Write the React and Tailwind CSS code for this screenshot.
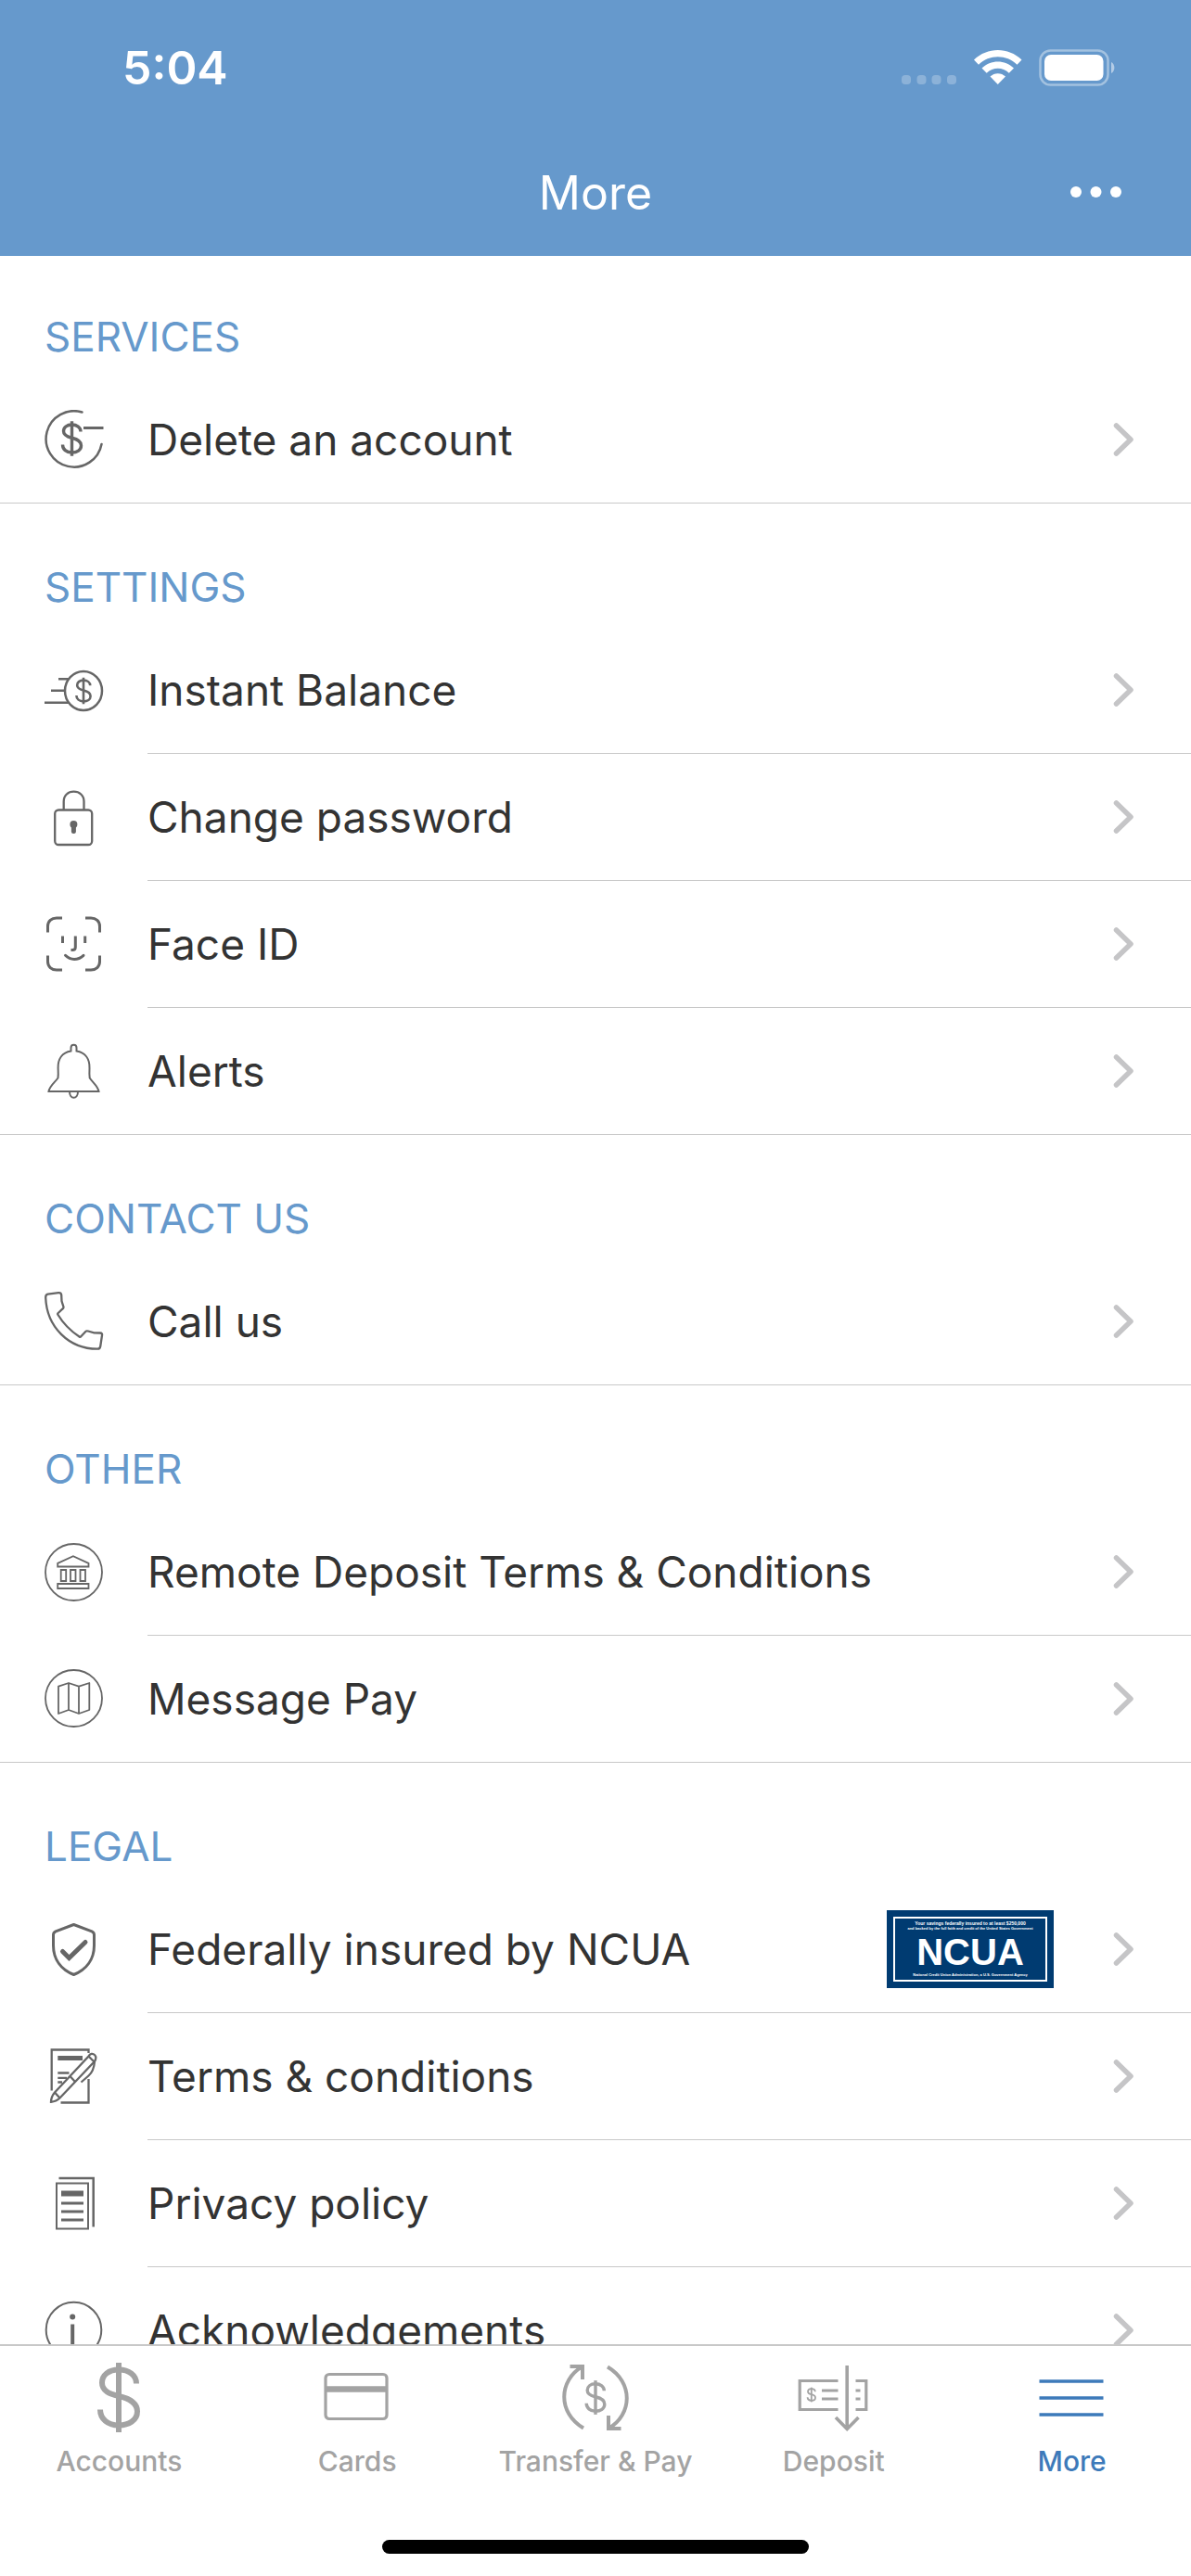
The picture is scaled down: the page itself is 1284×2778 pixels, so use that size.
import React from 'react';

// Dollar sign drawn in a 47x75 area around 0,0
const Dollar = ({ x, y, scale, width }) => (
  <g transform={`translate(${x} ${y}) scale(${scale})`} strokeWidth={width / scale} strokeLinecap="butt">
    <path d="M19 -15C19 -24 11 -30 0 -30C-11 -30 -18 -24 -18 -16C-18 -7 -10 -4 0 -1.5C11 1 20 5.500 20 15C20 24.500 11 30 0 30C-12 30 -20 23 -20 13" />
    <path d="M0 -37.500V37.500" />
  </g>
);

const RowSvg = ({ children, width = 2 }) => (
  <svg viewBox="0 0 64 64" className="size-16 shrink-0" fill="none" stroke="#666666" strokeWidth={width} aria-hidden="true">
    {children}
  </svg>
);

const DeleteIcon = () => (
  <RowSvg width={2.5}>
    <path d="M40.500 2.500A30.200 30.200 0 1 0 61.500 37" strokeLinecap="round" />
    <path d="M42 19.500H63.500" strokeWidth="3" />
    <Dollar x={29.5} y={31} scale={0.5} width={3.4} />
  </RowSvg>
);

const BalanceIcon = () => (
  <RowSvg width={2.5}>
    <ellipse cx="42" cy="32" rx="20" ry="21" />
    <path d="M15 19.200H26M7 31.800H22M0 44.800H26" />
    <Dollar x={42} y={32} scale={0.38} width={2.6} />
  </RowSvg>
);

const LockIcon = () => (
  <RowSvg width={2.3}>
    <rect x="11.200" y="23.500" width="40" height="37.500" rx="4" />
    <path d="M20.700 23V14.500C20.700 7.500 25.500 3.700 31.500 3.700C37.500 3.700 42.500 7.500 42.500 14.500V23" />
    <circle cx="31.400" cy="39" r="4" fill="#666666" stroke="none" />
    <path d="M31.400 40V46.500" strokeWidth="5" strokeLinecap="round" />
  </RowSvg>
);

const FaceIcon = () => (
  <RowSvg width={3}>
    <g transform="translate(0 -1)">
      <path d="M3.500 19.500V13C3.500 7.500 7.500 4 13 4H19M44 4H50C55.500 4 59.500 7.500 59.500 13V19.500M59.500 44.500V51C59.500 56.500 55.500 60 50 60H44M19 60H13C7.500 60 3.500 56.500 3.500 51V44.500" />
      <path d="M19.500 23.500V31M43.700 23.500V31M33.300 23.500V35.500C33.300 37.500 32 38.500 30 38.500H28.500" />
      <path d="M22.500 44.300C28 49.800 36 49.800 42 44.300" strokeLinecap="round" />
    </g>
  </RowSvg>
);

const BellIcon = () => (
  <RowSvg>
    <path d="M28.500 10.500V7C28.500 2.500 34.500 2.500 34.500 7V10.500C44 12 48.800 19 48.500 29C48.300 33 48.200 36 48.700 39.500C52 44.500 57.500 48 58.500 54H4.500C5.500 48 11 44.500 14.500 39.500C15 36 14.800 33 14.600 29C14.300 19 19 12 28.500 10.500Z" />
    <path d="M27 54C27 63 36 63 36 54" />
  </RowSvg>
);

const PhoneIcon = () => (
  <RowSvg width={2.3}>
    <path d="M3.500 2.700L15 1.200C17.200 1 18 1.700 18.200 3.500L18.500 10L20.500 16.500C20.700 17.700 20 18.300 19 19L14.500 23.200C14 23.800 14.200 24.500 14.600 25C20 34 28.500 42.500 37.500 48.500C38.200 49 38.800 48.800 39.300 48.200L44.500 42.800C45.300 42 46 42.200 47 42.500L53.500 44.300L60 44.500C61.800 44.600 62.300 45.500 62 47L60.300 58.500C60 61 59.300 61.800 57 61.700C26 61.500 2.500 38 1.200 6.500C1.100 4.200 1.500 3 3.500 2.700Z" />
  </RowSvg>
);

const BankIcon = () => (
  <RowSvg width={1.8}>
    <circle cx="31.500" cy="31.500" r="30.500" />
    <path d="M14.200 25.500V21.900L30.900 14.200L47.500 21.900V25.500ZM14.200 44H47.500V49H14.200Z" />
    <path d="M17.700 29H23.200V41H17.700ZM28 29H33.500V41H28ZM38.500 29H44V41H38.500Z" />
  </RowSvg>
);

const MapIcon = () => (
  <RowSvg width={1.8}>
    <circle cx="31.500" cy="31.500" r="30.500" />
    <path d="M15 18.700L26 15L37 18.700L48.300 15V44L37 48L26 44L15 48ZM26 15V44M37 18.700V48" strokeLinejoin="round" />
  </RowSvg>
);

const ShieldIcon = () => (
  <RowSvg width={3}>
    <path d="M31.500 4.500L51 11.800Q53.500 13 53.500 15.500V27C53.500 42 45 53 31.500 58.500C18 53 9.500 42 9.500 27V15.500Q9.500 13 12 11.800Z" strokeLinejoin="round" />
    <path d="M19.500 33.500L26.500 40.500L44 23.500" strokeWidth="5" strokeLinecap="round" />
  </RowSvg>
);

const TermsIcon = () => (
  <RowSvg width={2.3}>
    <path d="M7.700 46.500V2.500H47.500V6M47.500 34V59.500H17.500" />
    <path d="M14.300 11.500H41" strokeWidth="5" />
    <path d="M14.300 27.500H26.500M14.300 32.800H24M14.300 37.500H19" />
    <path d="M11 48.500L47.500 9.500C49 6.500 52 6 54 8C56 10 55.500 13 53.500 15.500L16.500 54.500C14 57 10 58.500 7 58.800C7 55.500 8.500 51.500 11 48.500Z" fill="#ffffff" />
    <path d="M11 48.500L16.500 54.500M27.500 31L33 37M47.500 9.500L53.500 15.500" />
    <path d="M54 15C53.500 22 51.500 27 47.500 30.500L39.500 37.500" />
  </RowSvg>
);

const PrivacyIcon = () => (
  <RowSvg>
    <rect x="13" y="9.500" width="34" height="49" />
    <path d="M15.500 4H52.700V56.500" strokeWidth="2.500" />
    <path d="M18 20.500H42" strokeWidth="6" />
    <path d="M18 31H42M18 40H42M18 49H42" strokeWidth="3" />
  </RowSvg>
);

const InfoIcon = () => (
  <RowSvg>
    <circle cx="31.500" cy="31.500" r="29.800" />
    <circle cx="30.200" cy="17.500" r="3" fill="#666666" stroke="none" />
    <path d="M30.200 25.500V47" strokeWidth="4" />
  </RowSvg>
);

const Chevron = () => (
  <svg viewBox="0 0 22 36" className="h-9 w-[22px] shrink-0" fill="none" stroke="#c5c5c7" strokeWidth="5.500" strokeLinecap="round" strokeLinejoin="round" aria-hidden="true">
    <path d="M3.500 3L19 18L3.500 33" />
  </svg>
);

const NcuaBadge = () => (
  <div className="mr-16 h-[84px] w-[180px] shrink-0 bg-[#003b71] p-[7px] text-white">
    <div className="flex h-full flex-col items-center border-2 border-white pt-0.5 font-['Liberation_Sans_Narrow','Liberation_Sans',sans-serif] text-[4px] leading-[6px] font-bold whitespace-nowrap">
      <span className="text-[5px]">Your savings federally insured to at least $250,000</span>
      <span>and backed by the full faith and credit of the United States Government</span>
      <span className="font-['Liberation_Sans',sans-serif] text-[40px] leading-[44px]">NCUA</span>
      <span>National Credit Union Administration, a U.S. Government Agency</span>
    </div>
  </div>
);

const sections = [
  { title: 'SERVICES', items: [{ label: 'Delete an account', icon: DeleteIcon }] },
  {
    title: 'SETTINGS',
    items: [
      { label: 'Instant Balance', icon: BalanceIcon },
      { label: 'Change password', icon: LockIcon },
      { label: 'Face ID', icon: FaceIcon },
      { label: 'Alerts', icon: BellIcon },
    ],
  },
  { title: 'CONTACT US', items: [{ label: 'Call us', icon: PhoneIcon }] },
  {
    title: 'OTHER',
    items: [
      { label: 'Remote Deposit Terms & Conditions', icon: BankIcon },
      { label: 'Message Pay', icon: MapIcon },
    ],
  },
  {
    title: 'LEGAL',
    items: [
      { label: 'Federally insured by NCUA', icon: ShieldIcon, badge: true },
      { label: 'Terms & conditions', icon: TermsIcon },
      { label: 'Privacy policy', icon: PrivacyIcon },
      { label: 'Acknowledgements', icon: InfoIcon },
    ],
  },
];

const tabs = [
  { label: 'Accounts', art: <Dollar x={40} y={39.5} scale={1} width={6} /> },
  {
    label: 'Cards',
    art: (
      <>
        <rect x="6" y="14.500" width="66" height="48" rx="4" />
        <path d="M6 30.500H72" strokeWidth="6.500" />
      </>
    ),
  },
  {
    label: 'Transfer & Pay',
    art: (
      <>
        <path d="M12.500 6H26V20M26 6C0 21 -1 56 27 72.500" strokeWidth="4" />
        <path d="M67.500 73H54V59M54 73C80 58 81 23 53 6.500" strokeWidth="4" />
        <Dollar x={40} y={39.5} scale={0.49} width={3.4} />
      </>
    ),
  },
  {
    label: 'Deposit',
    art: (
      <g transform="translate(-2 0)">
        <path d="M46.500 21.500H5.200V52.500H46.500M65.500 21.500H76.800V52.500H65.500" />
        <path d="M29 32H46.500M29 41H46.500M65.500 32H70.500M65.500 41H70.500" />
        <path d="M56.200 5V73M44 61L56.200 73.500L68.500 61" strokeWidth="3.600" />
        <Dollar x={17.8} y={36.5} scale={0.21} width={1.8} />
      </g>
    ),
  },
  { label: 'More', active: true, art: <path d="M4.500 22H73.500M4.500 40H73.500M4.500 58H73.500" strokeWidth="3.600" /> },
];

const StatusBar = () => (
  <div className="flex h-[146px] items-center justify-between pr-[82px] pl-[132px]">
    <span className="text-[50px] leading-none font-semibold">5:04</span>
    <svg viewBox="0 0 230 40" className="h-10 w-[230px]" fill="#ffffff" aria-hidden="true">
      <g opacity="0.250">
        <rect x="0" y="28" width="10" height="10" rx="4" />
        <rect x="16.500" y="28" width="10" height="10" rx="4" />
        <rect x="32.500" y="28" width="10" height="10" rx="4" />
        <rect x="49" y="28" width="10" height="10" rx="4" />
      </g>
      <path d="M78 11.500C92.500 -2.500 115 -2.500 129.500 11.500L124.500 16.800C113 5.500 94.500 5.500 83 16.800Z" />
      <path d="M86.500 20.500C96 11 111.500 11 121 20.500L115.800 25.800C109 19 98.500 19 91.700 25.800Z" />
      <path d="M95.500 29.500C100 25 107.500 25 112 29.500L103.700 38Z" />
      <rect x="149.500" y="1.500" width="73" height="37" rx="11" fill="none" stroke="#ffffff" strokeOpacity="0.400" strokeWidth="2.500" />
      <rect x="154" y="6" width="63.500" height="28" rx="7" />
      <path d="M226 14C230.500 16 230.500 24 226 26Z" opacity="0.500" />
    </svg>
  </div>
);

const App = () => {
  return (
    <div className="flex h-screen flex-col overflow-hidden bg-white font-['Inter',sans-serif] text-[#333333]">
      <header className="h-[276px] shrink-0 bg-[#6699cc] text-white">
        <StatusBar />
        <div className="grid h-[124px] grid-cols-3 items-center px-[72px]">
          <h1 className="col-start-2 text-center text-[50px] leading-none">More</h1>
          <button type="button" aria-label="More options" className="justify-self-end">
            <svg viewBox="0 0 60 24" className="h-6 w-[60px]" fill="#ffffff" aria-hidden="true">
              <circle cx="8" cy="11" r="6" />
              <circle cx="29.500" cy="11" r="6" />
              <circle cx="51" cy="11" r="6" />
            </svg>
          </button>
        </div>
      </header>

      {/* Menu */}
      <main className="min-h-0 flex-1 overflow-y-auto [scrollbar-width:none]">
        {sections.map((section) => (
          <section key={section.title} className="border-b border-[#c8c8c8] pt-[66px] first:pt-[63px]">
            <h2 className="pb-[19px] pl-12 text-[44px] leading-[48px] text-[#6699cc]">{section.title}</h2>
            <ul>
              {section.items.map(({ label, icon: Icon, badge }) => (
                <li key={label} className="group">
                  <a href="#" className="flex items-center pl-12">
                    <Icon />
                    <div className="ml-[47px] flex h-[137px] flex-1 items-center border-b border-[#c8c8c8] pr-[62px] group-last:h-[136px] group-last:border-b-0">
                      <span className="flex-1 text-[46px] leading-[56px]">{label}</span>
                      {badge && <NcuaBadge />}
                      <Chevron />
                    </div>
                  </a>
                </li>
              ))}
            </ul>
          </section>
        ))}
      </main>

      {/* Tab bar */}
      <footer className="h-[250px] shrink-0 border-t-2 border-[#c8c8c8] bg-white">
        <nav className="grid grid-cols-5 pt-4">
          {tabs.map((tab) => (
            <a
              key={tab.label}
              href="#"
              className={`flex flex-col items-center ${tab.active ? 'text-[#3d7aba]' : 'text-[#a3a3a3]'}`}
            >
              <svg viewBox="0 0 80 80" className="size-20" fill="none" stroke="currentColor" strokeWidth="3.200" aria-hidden="true">
                {tab.art}
              </svg>
              <span className="mt-2.5 text-[30px] leading-9 font-medium">{tab.label}</span>
            </a>
          ))}
        </nav>
        <div className="mx-auto mt-[67px] h-[15px] w-[460px] rounded-full bg-black" />
      </footer>
    </div>
  );
};

export default App;
